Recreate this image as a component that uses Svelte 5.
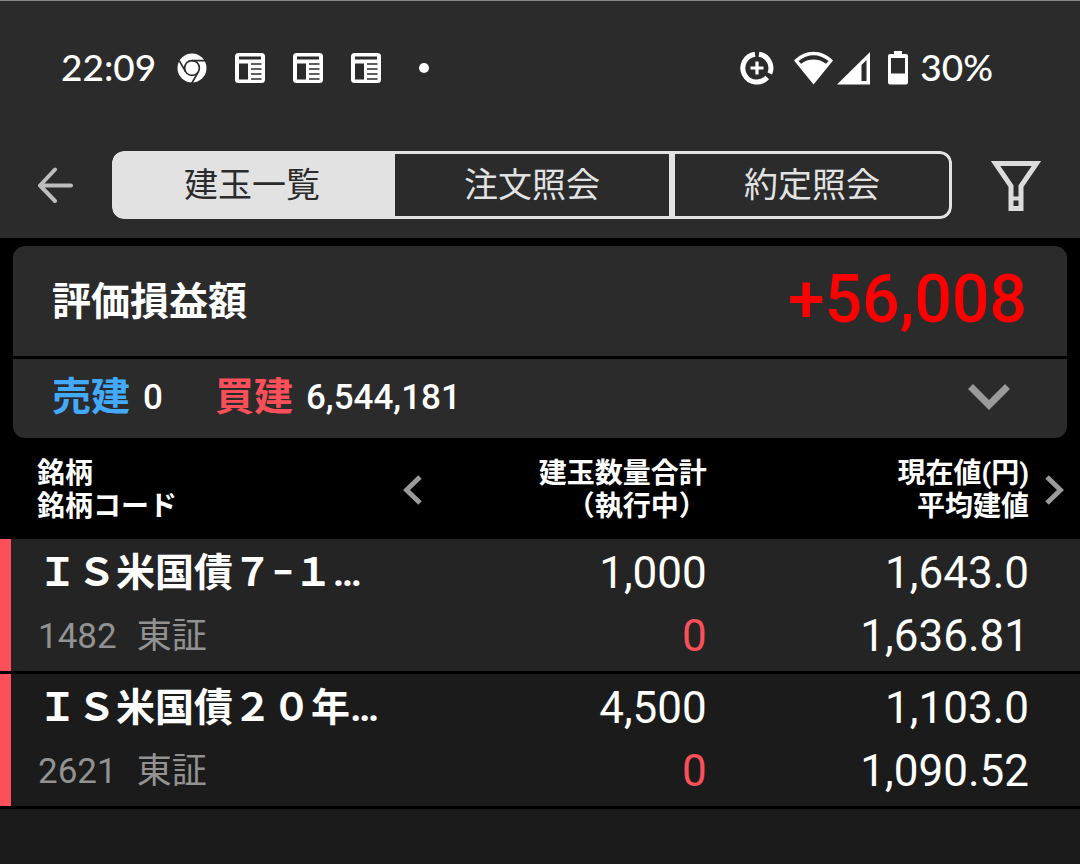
<script>
    /* Posiciones abiertas */
    let tabs = ['建玉一覧', '注文照会', '約定照会'];
    let active = $state(0);
    let open = $state(false);

    let positions = [
        { name: 'ＩＳ米国債７−１…', code: '1482', market: '東証', qty: '1,000', pending: '0', price: '1,643.0', average: '1,636.81' },
        { name: 'ＩＳ米国債２０年…', code: '2621', market: '東証', qty: '4,500', pending: '0', price: '1,103.0', average: '1,090.52' }
    ];
</script>

<div class="status-bar">
    <span class="clock">22:09</span>
    <div class="notifications">
        <svg width="30" height="32" viewBox="0 0 30 32" aria-hidden="true">
            <circle cx="15" cy="16" r="14.5" fill="#fff" />
            <circle cx="15" cy="16" r="7.4" fill="none" stroke="#2b2b2b" stroke-width="1.7" />
            <path d="M15 8.6H29M8.6 19.7L2.2 8.6M21.4 19.7L14.4 32" stroke="#2b2b2b" stroke-width="1.7" />
        </svg>
        {#each [1, 2, 3] as n (n)}
            <svg width="30" height="32" viewBox="0 0 30 32" aria-hidden="true">
                <rect x="0" y="1" width="30" height="30" rx="3.5" fill="#fff" />
                <path d="M4 4.5H26V7.5H4ZM4 11.5H13V27.5H4Z" fill="#2b2b2b" />
                <path d="M16 12H26.500M16 17H26.500M16 22H26.500M16 27H26.500" stroke="#2b2b2b" stroke-width="1.4" />
            </svg>
        {/each}
        <svg width="30" height="32" viewBox="0 0 30 32" aria-hidden="true">
            <circle cx="15" cy="16" r="5" fill="#fff" />
        </svg>
    </div>
    <div class="system">
        <svg class="saver" width="34" height="34" viewBox="0 0 34 34" fill="none" stroke="#fff" aria-hidden="true">
            <path d="M19 3.2A14 14 0 0 1 29.8 22.5M27.2 26.5A14 14 0 1 1 15 3.2" stroke-width="5" />
            <path d="M17 10.5V23.5M10.5 17H23.5" stroke-width="3.2" />
        </svg>
        <svg class="wifi" width="39" height="34" viewBox="0 0 39 34" aria-hidden="true">
            <path d="M0 9.5C11 -2.2 28 -2.2 39 9.5L19.5 33.5Z" fill="#fff" />
            <path d="M4.500 10C14 2.400 25 2.400 34.500 10L32 12.800C25 7 14 7 7 12.800Z" fill="#2b2b2b" />
        </svg>
        <svg class="signal" width="33" height="34" viewBox="0 0 33 34" aria-hidden="true">
            <path d="M0 33.5L33 1V33.5Z" fill="#fff" />
            <path d="M24.5 14L29.500 9V30H24.5Z" fill="#2b2b2b" />
        </svg>
        <svg class="battery" width="20" height="34" viewBox="0 0 20 34" aria-hidden="true">
            <path d="M6 0H14V3H18Q20 3 20 5V31.5Q20 33.5 18 33.5H2Q0 33.5 0 31.5V5Q0 3 2 3H6Z" fill="#fff" />
            <path d="M3 7H17V22.5H3Z" fill="#2b2b2b" />
        </svg>
        <span>30%</span>
    </div>
</div>

<nav class="toolbar">
    <button class="icon-btn" aria-label="戻る">
        <svg width="35" height="36" viewBox="0 0 35 36" fill="none" stroke="#bdbdbd" stroke-width="4" stroke-linecap="round" stroke-linejoin="round">
            <path d="M33 18.500H2M17 2.500L2 18.500L17 34" />
        </svg>
    </button>
    <div class="tabs">
        {#each tabs as tab, i (tab)}
            <button class="tab" class:active={active === i} onclick={() => (active = i)}>{tab}</button>
        {/each}
    </div>
    <button class="icon-btn" aria-label="絞り込み">
        <svg width="50" height="52" viewBox="0 0 50 52" fill="none" stroke="#dcdcdc" stroke-width="5">
            <path d="M4.5 4.500H45.5L30 27V49.500H20V27Z" />
            <path d="M20 39.500H30" stroke-width="4" />
        </svg>
    </button>
</nav>

<main>
    <section class="summary">
        <div class="total">
            <span class="label">評価損益額</span>
            <span class="profit">+56,008</span>
        </div>
        <div class="breakdown">
            <span class="label sell">売建</span>
            <span class="amount">0</span>
            <span class="label buy">買建</span>
            <span class="amount">6,544,181</span>
            <button class="icon-btn toggle" aria-label="詳細" aria-expanded={open} onclick={() => (open = !open)}>
                <svg width="42" height="28" viewBox="0 0 42 28" fill="none" stroke="#9a9a9a" stroke-width="7">
                    <path d="M2.5 3.500L21 22L39.5 3.500" />
                </svg>
            </button>
        </div>
    </section>

    <table>
        <thead>
            <tr>
                <th class="col-name">
                    <div class="head">
                        <span>銘柄<br />銘柄コード</span>
                        <button class="icon-btn" aria-label="前の項目">
                            <svg width="19" height="30" viewBox="0 0 19 30" fill="none" stroke="#9a9a9a" stroke-width="5">
                                <path d="M17 2L3.5 15L17 28" />
                            </svg>
                        </button>
                    </div>
                </th>
                <th class="col-qty">建玉数量合計<br />（執行中）</th>
                <th class="col-price">
                    <div class="head">
                        <span>現在値(円)<br />平均建値</span>
                        <button class="icon-btn" aria-label="次の項目">
                            <svg width="19" height="30" viewBox="0 0 19 30" fill="none" stroke="#9a9a9a" stroke-width="5">
                                <path d="M2 2L15.5 15L2 28" />
                            </svg>
                        </button>
                    </div>
                </th>
            </tr>
        </thead>
        <tbody>
            {#each positions as p (p.code)}
                <tr>
                    <td class="col-name">
                        <div class="name">{p.name}</div>
                        <div class="code"><span>{p.code}</span><span>{p.market}</span></div>
                    </td>
                    <td class="col-qty">
                        <div>{p.qty}</div>
                        <div class="pending">{p.pending}</div>
                    </td>
                    <td class="col-price">
                        <div>{p.price}</div>
                        <div>{p.average}</div>
                    </td>
                </tr>
            {/each}
        </tbody>
    </table>
</main>

<style>
    :global(body) {
        background: #1b1b1b;
        color: #fff;
        font-family: Roboto, "Noto Sans CJK JP", sans-serif;
    }

    svg {
        display: block;
    }

    button {
        padding: 0;
        background: none;
        font: inherit;
        cursor: pointer;
    }

    .icon-btn {
        border: none;
        flex: none;
    }

    .status-bar {
        display: flex;
        align-items: center;
        box-sizing: border-box;
        height: 135px;
        padding: 0 87px 0 61px;
        border-top: 1px solid #888;
        background: #2b2b2b;
        font-family: Lato, sans-serif;
        font-size: 37px;
        font-weight: 500;
    }

    .status-bar span {
        padding-bottom: 4px;
    }

    .notifications {
        display: flex;
        gap: 28px;
        margin-left: 21px;
    }

    .system {
        display: flex;
        align-items: center;
        margin-left: auto;
    }

    .saver {
        margin-right: 20px;
    }

    .wifi {
        margin-right: 4px;
    }

    .signal {
        margin-right: 18px;
    }

    .battery {
        margin-right: 12px;
    }

    .toolbar {
        display: flex;
        align-items: center;
        gap: 39px;
        padding: 16px 39px 19px 38px;
        background: #2b2b2b;
    }

    .tabs {
        flex: 1;
        display: flex;
        border-radius: 12px;
        overflow: hidden;
    }

    .tab {
        flex: 1;
        height: 68px;
        padding-bottom: 6px;
        border: 3px solid #e2e2e2;
        color: #e2e2e2;
        font-size: 34px;
    }

    .tab:first-child {
        border-radius: 12px 0 0 12px;
    }

    .tab:last-child {
        border-radius: 0 12px 12px 0;
    }

    .tab.active {
        background: #e2e2e2;
        color: #2b2b2b;
    }

    main {
        padding-top: 8px;
        background: #000;
    }

    .summary {
        margin: 0 13px;
        border-radius: 12px;
        overflow: hidden;
    }

    .total,
    .breakdown {
        display: flex;
        align-items: center;
        box-sizing: border-box;
        padding: 0 40px 3px 39px;
        background: #2b2b2b;
    }

    .total {
        justify-content: space-between;
        height: 110px;
        margin-bottom: 3px;
    }

    .breakdown {
        height: 79px;
    }

    .label {
        padding-bottom: 4px;
        font-size: 39px;
        font-weight: 700;
    }

    .breakdown .label {
        padding-bottom: 8px;
    }

    .profit {
        color: #f00;
        font-size: 66px;
        font-weight: 500;
    }

    .amount {
        margin: 0 52px 0 13px;
        font-size: 35px;
        font-weight: 500;
    }

    .sell {
        color: #42a9fb;
    }

    .buy {
        color: #fb5059;
    }

    .toggle {
        margin: 0 17px 0 auto;
    }

    table {
        width: 100%;
        border-collapse: collapse;
        table-layout: fixed;
    }

    th,
    td {
        box-sizing: border-box;
    }

    th {
        padding: 19px 0 16px;
        font-size: 28px;
        font-weight: 700;
        line-height: 33px;
        text-align: right;
    }

    .head {
        display: flex;
        align-items: center;
        justify-content: flex-end;
        gap: 16px;
    }

    .col-name {
        width: 41%;
        text-align: left;
    }

    .col-qty {
        width: 25%;
        padding-right: 6px;
    }

    th.col-name {
        padding-left: 37px;
        padding-right: 21px;
    }

    .col-name .head {
        justify-content: space-between;
    }

    th.col-price {
        padding-right: 16px;
    }

    tbody tr {
        background: #242424;
        border-bottom: 3px solid #000;
    }

    tbody tr:nth-child(even) {
        background: #1b1b1b;
    }

    td {
        padding: 3px 0;
        font-size: 44px;
        line-height: 63px;
        text-align: right;
        vertical-align: top;
    }

    td.col-name {
        padding-left: 38px;
        background: linear-gradient(to right, #fb5059 11px, transparent 11px);
    }

    td.col-price {
        padding-right: 51px;
    }

    .name {
        font-size: 39px;
        font-weight: 700;
        white-space: nowrap;
    }

    .code {
        display: flex;
        gap: 20px;
        color: #929292;
        font-size: 35px;
    }

    .pending {
        color: #fb5059;
    }
</style>
